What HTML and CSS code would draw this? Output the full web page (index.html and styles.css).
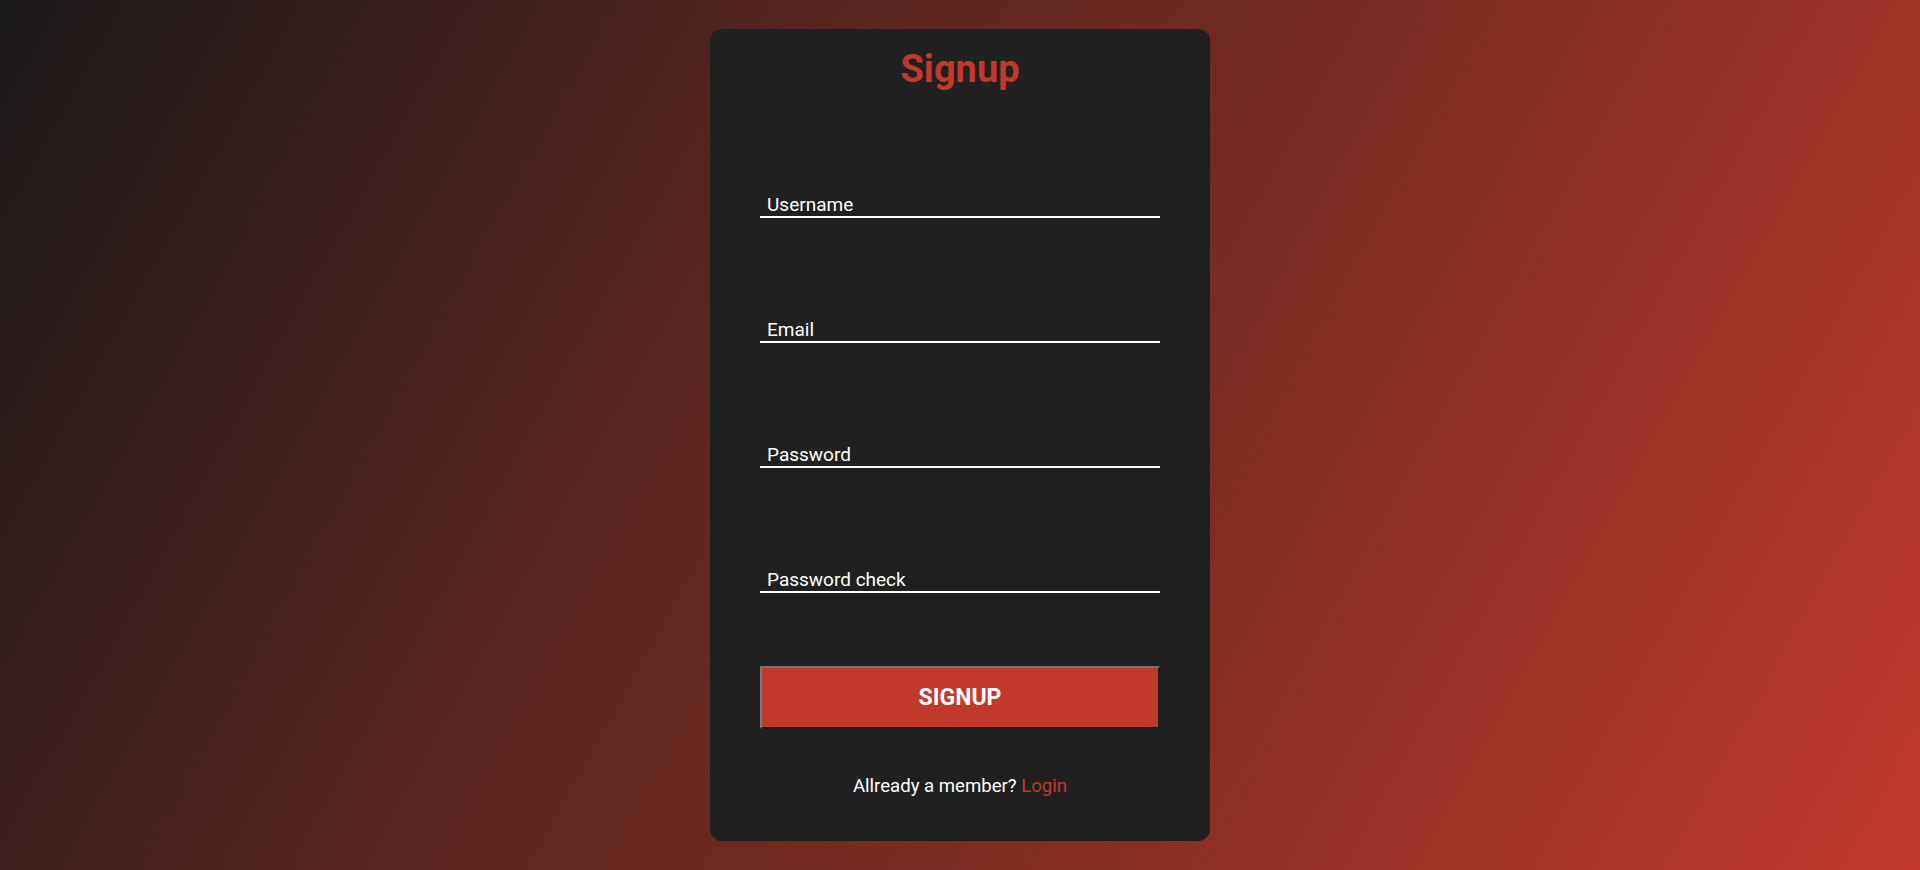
FILE: index.html
```html
<!DOCTYPE html>
<html lang="en">
<head>
<meta charset="utf-8">
<title>Signup</title>
<link rel="stylesheet" href="styles.css">
</head>
<body>
<main class="page">
  <section class="card">
    <header class="card-header">
      <h1 class="title">Signup</h1>
    </header>
    <form class="form">
      <div class="field">
        <input class="input" type="text" id="username">
        <label class="label" for="username">Username</label>
      </div>
      <div class="field">
        <input class="input" type="email" id="email">
        <label class="label" for="email">Email</label>
      </div>
      <div class="field">
        <input class="input" type="password" id="password">
        <label class="label" for="password">Password</label>
      </div>
      <div class="field">
        <input class="input" type="password" id="password2">
        <label class="label" for="password2">Password check</label>
      </div>
      <button class="btn" type="button">SIGNUP</button>
      <p class="footer">Allready a member? <a class="link" href="#">Login</a></p>
    </form>
  </section>
</main>
</body>
</html>
```

FILE: styles.css
```css
* { box-sizing: border-box; }
html, body { margin: 0; padding: 0; }
body {
  height: 870px;
  font-family: Roboto, "Liberation Sans", sans-serif;
  background: linear-gradient(119deg, #1b1919 0%, #c0392b 100%);
  color: #fff;
}
.page {
  height: 100%;
  display: flex;
  align-items: center;
  justify-content: center;
}
.card {
  width: 500px;
  height: 812px;
  background: #212020;
  border-radius: 12px;
  display: flex;
  flex-direction: column;
}
.card-header {
  height: 102px;
  border-bottom: 1px solid #1a1919;
  display: flex;
  justify-content: center;
  padding-top: 20px;
}
.title {
  margin: 0;
  font-size: 38px;
  line-height: 40px;
  font-weight: 700;
  color: #c0392b;
}
.form {
  padding: 35px 50px 0;
  display: flex;
  flex-direction: column;
  gap: 73px;
}
.field {
  display: grid;
  height: 52px;
}
.input {
  grid-area: 1 / 1;
  width: 100%;
  height: 52px;
  background: transparent;
  border: none;
  border-bottom: 2px solid #fff;
  outline: none;
  color: #fff;
  font: inherit;
}
.label {
  grid-area: 1 / 1;
  align-self: end;
  margin: 0 0 4px 7px;
  font-size: 19px;
  line-height: 1;
  color: #fff;
}
.btn {
  height: 63px;
  width: 100%;
  background: #c0392b;
  color: #fff;
  font-family: inherit;
  font-size: 23px;
  font-weight: 700;
  border-style: solid;
  border-width: 2px;
  border-color: #767676 #1f1f1f #1f1f1f #767676;
  padding: 0;
}
.footer {
  margin: -26px 0 0;
  text-align: center;
  font-size: 18.6px;
  line-height: 21.6px;
  color: #fff;
}
.link {
  color: #c0392b;
  text-decoration: none;
}
```
